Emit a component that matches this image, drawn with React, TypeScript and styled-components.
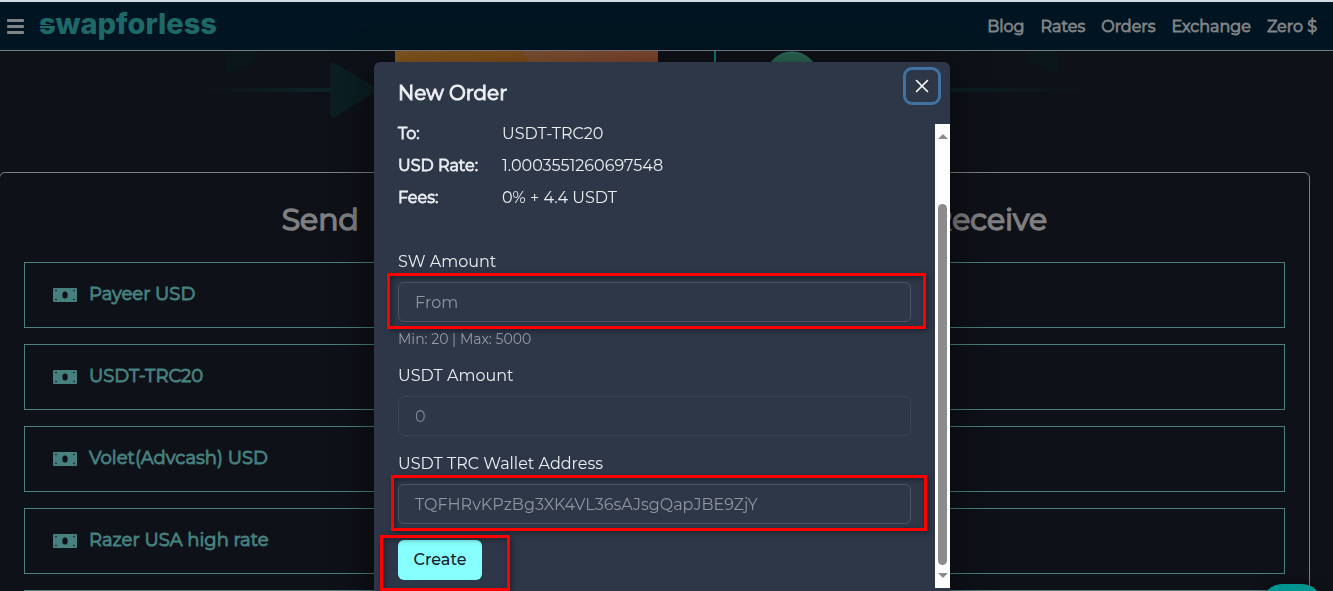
import React from "react";
import styled, { createGlobalStyle, css } from "styled-components";

const GlobalStyle = createGlobalStyle`
  *, *::before, *::after { box-sizing: border-box; }
  html, body { margin: 0; background: #0e1118; }
  body { font-family: Montserrat, Inter, "Liberation Sans", sans-serif; font-size: 16px; line-height: 24px; overflow: hidden; }
  h1, h2, p, dl, dd, ul { margin: 0; padding: 0; }
`;

/* Regular face thickened by an outline, keeping the regular letter widths. */
const emphasis = css`
  font-weight: 400;
  -webkit-text-stroke: 0.05em currentColor;
`;

const Page = styled.div`
  height: 100vh;
  overflow: hidden;
`;

const Header = styled.header`
  display: flex;
  align-items: center;
  height: 51px;
  padding: 0 16px 0 7px;
  background: #001521;
  border-top: 2px solid #d0dce0;
  border-bottom: 1px solid #767c80;
`;

const MenuButton = styled.button`
  display: flex;
  padding: 0;
  border: 0;
  background: none;
  color: #808486;
`;

const Logo = styled.a`
  position: relative;
  margin: 0 auto 4px 15px;
  font-family: Inter, sans-serif;
  font-size: 29px;
  line-height: 40px;
  font-weight: 800;
  color: #1e6868;
  text-decoration: none;

  &::before {
    content: "";
    position: absolute;
    left: 1px;
    top: 21px;
    width: 15px;
    height: 3px;
    background: #1e6868;
    border-top: 1px solid #001521;
  }
`;

const Nav = styled.nav`
  display: flex;
  gap: 16px;
  padding-top: 2px;
`;

const NavLink = styled.a`
  ${emphasis}
  color: #808486;
  text-decoration: none;
`;

const Hero = styled.section`
  height: 121px;
  overflow: hidden;

  svg { display: block; width: 100%; height: 121px; }
`;

const Exchange = styled.main`
  display: grid;
  grid-template-columns: 1fr 1fr;
  column-gap: 76px;
  margin: 0 23px 0 -1px;
  padding: 24px;
  border: 1px solid #7d8184;
  border-radius: 6px;
`;

const ColumnTitle = styled.h1`
  ${emphasis}
  margin-bottom: 20px;
  font-size: 30px;
  line-height: 45px;
  color: #7f7f81;
  text-align: center;
`;

const CurrencyList = styled.div`
  display: flex;
  flex-direction: column;
  gap: 16px;
`;

const Currency = styled.button`
  display: flex;
  align-items: center;
  gap: 12px;
  height: 66px;
  padding: 0 28px 2px;
  border: 1px solid #4a817e;
  background: none;
  color: #46807f;
  font: inherit;
  font-size: 18px;
  ${emphasis}

  svg { position: relative; top: 1px; }
`;

const Overlay = styled.div`
  position: fixed;
  inset: 0;
  display: flex;
  justify-content: center;
  align-items: flex-start;
  padding: 62px 9px 0 0;
`;

const Modal = styled.section`
  width: 576px;
  max-width: 100%;
  padding-bottom: 16px;
  border-radius: 6px;
  background: #2d3748;
  color: #eceef1;
  box-shadow: 0 10px 40px rgba(0, 0, 0, 0.6);
`;

const ModalHeader = styled.header`
  display: flex;
  justify-content: space-between;
  align-items: flex-start;
  height: 62px;
  padding: 8px 12px 0 24px;
`;

const ModalTitle = styled.h2`
  ${emphasis}
  padding-top: 8px;
  font-size: 20px;
  line-height: 30px;
`;

const CloseButton = styled.button`
  display: grid;
  place-items: center;
  width: 32px;
  height: 32px;
  padding: 0;
  border: 0;
  border-radius: 6px;
  background: none;
  color: #fff;
  box-shadow: 0 0 0 3px #4272a1;
`;

const ModalBody = styled.div`
  display: flex;
  height: 464px;
`;

const Content = styled.div`
  flex: 1;
  padding: 0 24px;
`;

const Summary = styled.dl`
  display: grid;
  grid-template-columns: 104px 1fr;
  row-gap: 8px;
  padding: 0 0 40px;
  margin-top: -2px;

  dt { ${emphasis} }
`;

const Form = styled.form`
  display: flex;
  flex-direction: column;
  gap: 16px;
`;

const Field = styled.div`
  display: flex;
  flex-direction: column;
  gap: 8px;
`;

const Label = styled.label``;

const InputWrap = styled.div`
  position: relative;
`;

const Input = styled.input`
  display: block;
  width: 100%;
  height: 40px;
  padding: 0 16px;
  border: 1px solid #4b5464;
  border-radius: 6px;
  background: transparent;
  color: #8c929c;
  font: inherit;

  &::placeholder { color: #8f96a0; opacity: 1; }
  &:disabled { border-color: #394354; color: #7c8490; }
`;

const Hint = styled.p`
  margin: -1px 0;
  font-size: 14px;
  line-height: 20px;
  color: #969ca5;
`;

const CreateWrap = styled.div`
  position: relative;
  width: 84px;
`;

const CreateButton = styled.button`
  width: 84px;
  height: 40px;
  padding: 0;
  border: 0;
  border-radius: 6px;
  background: #86fffe;
  color: #1a202c;
  font: inherit;
  font-weight: 500;
`;

const Highlight = styled.span<{ $inset: string }>`
  position: absolute;
  inset: ${(p) => p.$inset};
  border: 3px solid #fe0000;
  box-shadow: 2px 2px 5px rgba(0, 0, 0, 0.35), inset 2px 2px 5px rgba(0, 0, 0, 0.35);
  pointer-events: none;
`;

const ScrollTrack = styled.div`
  display: flex;
  flex-direction: column;
  align-items: center;
  justify-content: space-between;
  width: 15px;
  padding: 10px 0;
  background: #fdfdfd;
`;

const ScrollThumb = styled.div`
  flex: 1;
  width: 9px;
  margin: 65px 0 8px;
  border-radius: 5px;
  background: #8b8b8b;
`;

const ScrollArrow = styled.span<{ $down?: boolean }>`
  border: 5px solid transparent;
  border-width: ${(p) => (p.$down ? "5px 5px 0" : "0 5px 5px")};
  border-color: ${(p) => (p.$down ? "#8b8b8b transparent transparent" : "transparent transparent #8b8b8b")};
`;

const ChatButton = styled.button`
  position: fixed;
  top: 584px;
  right: 11px;
  width: 60px;
  height: 56px;
  border: 0;
  border-radius: 20px;
  background: #009591;
  box-shadow: 0 0 12px rgba(0, 0, 0, 0.5);
`;

const MenuIcon = () => (
  <svg width="17" height="16" viewBox="0 0 17 16" fill="currentColor" aria-hidden="true">
    <rect y="1" width="17" height="3" rx="1" />
    <rect y="7" width="17" height="3" rx="1" />
    <rect y="13" width="17" height="3" rx="1" />
  </svg>
);

const CashIcon = () => (
  <svg width="24" height="14" viewBox="0 0 24 14" aria-hidden="true">
    <rect width="24" height="14" rx="1" fill="#46807f" />
    <ellipse cx="12" cy="7" rx="2.700" ry="3.500" fill="#0e1118" />
    <g fill="#0e1118">
      <circle cx="3" cy="2.500" r=".8" />
      <circle cx="21" cy="2.500" r=".8" />
      <circle cx="3" cy="11.500" r=".8" />
      <circle cx="21" cy="11.500" r=".8" />
    </g>
  </svg>
);

const CloseIcon = () => (
  <svg width="14" height="14" viewBox="0 0 14 14" fill="none" stroke="currentColor" strokeWidth="1.600" strokeLinecap="round" aria-hidden="true">
    <path d="M1.500 1.500l11 11M12.500 1.500l-11 11" />
  </svg>
);

const HeroArt = () => (
  <svg viewBox="0 51 1333 121" preserveAspectRatio="xMidYMin slice" aria-hidden="true">
    <defs>
      <linearGradient id="orange">
        <stop offset="0" stopColor="#865a20" />
        <stop offset="1" stopColor="#7e4516" />
      </linearGradient>
      <linearGradient id="copper">
        <stop offset="0" stopColor="#805333" />
        <stop offset="1" stopColor="#80472f" />
      </linearGradient>
      <linearGradient id="trailLeft">
        <stop offset="0" stopColor="#0c2628" stopOpacity="0" />
        <stop offset="1" stopColor="#0c2425" />
      </linearGradient>
      <linearGradient id="trailRight">
        <stop offset="0" stopColor="#0c2023" />
        <stop offset="1" stopColor="#0c2023" stopOpacity="0" />
      </linearGradient>
    </defs>
    <path d="M226 51v25l27-14q6-4 3-11z" fill="#0b161b" />
    <rect x="200" y="88" width="132" height="4" fill="url(#trailLeft)" />
    <path d="M330 65q1-4 5-2l44 27-44 27q-4 2-5-2z" fill="#0b1e22" />
    <path d="M395 51h263v12H395z" fill="url(#orange)" />
    <path d="M522 51h136v12H529z" fill="url(#copper)" />
    <path d="M714 51h2v12h-2z" fill="#0b7977" />
    <circle cx="792" cy="78" r="26" fill="#2a6551" stroke="#2f7c68" />
    <rect x="950" y="88" width="146" height="4" fill="url(#trailRight)" />
    <path d="M1058 51v25l-27-14q-6-4-3-11z" fill="#0b161b" />
  </svg>
);

const navItems = ["Blog", "Rates", "Orders", "Exchange", "Zero $"];
const sendItems = ["Payeer USD", "USDT-TRC20", "Volet(Advcash) USD", "Razer USA high rate", ""];

export default function App() {
  return (
    <Page>
      <GlobalStyle />
      <Header>
        <MenuButton aria-label="Menu"><MenuIcon /></MenuButton>
        <Logo href="#">swapforless</Logo>
        <Nav>
          {navItems.map((item) => <NavLink key={item} href="#">{item}</NavLink>)}
        </Nav>
      </Header>
      <Hero><HeroArt /></Hero>
      <Exchange>
        <div>
          <ColumnTitle>Send</ColumnTitle>
          <CurrencyList>
            {sendItems.map((item) => (
              <Currency key={item}><CashIcon />{item}</Currency>
            ))}
          </CurrencyList>
        </div>
        <div>
          <ColumnTitle>Receive</ColumnTitle>
          <CurrencyList>
            {sendItems.map((item) => <Currency key={item} aria-label="Receive currency" />)}
          </CurrencyList>
        </div>
      </Exchange>

      <Overlay>
        <Modal role="dialog" aria-labelledby="order-title">
          <ModalHeader>
            <ModalTitle id="order-title">New Order</ModalTitle>
            <CloseButton aria-label="Close"><CloseIcon /></CloseButton>
          </ModalHeader>
          <ModalBody>
            <Content>
              <Summary>
                <dt>To:</dt><dd>USDT-TRC20</dd>
                <dt>USD Rate:</dt><dd>1.0003551260697548</dd>
                <dt>Fees:</dt><dd>0% + 4.4 USDT</dd>
              </Summary>
              <Form onSubmit={(e) => e.preventDefault()}>
                <Field>
                  <Label htmlFor="from">SW Amount</Label>
                  <InputWrap>
                    <Input id="from" placeholder="From" />
                    <Highlight $inset="-9px -15px -7px -11px" />
                  </InputWrap>
                  <Hint>Min: 20 | Max: 5000</Hint>
                </Field>
                <Field>
                  <Label htmlFor="amount">USDT Amount</Label>
                  <Input id="amount" defaultValue="0" disabled />
                </Field>
                <Field>
                  <Label htmlFor="wallet">USDT TRC Wallet Address</Label>
                  <InputWrap>
                    <Input id="wallet" placeholder="TQFHRvKPzBg3XK4VL36sAJsgQapJBE9ZjY" />
                    <Highlight $inset="-9px -16px -7px -7px" />
                  </InputWrap>
                </Field>
                <CreateWrap>
                  <CreateButton type="submit">Create</CreateButton>
                  <Highlight $inset="-5px -28px -11px -18px" />
                </CreateWrap>
              </Form>
            </Content>
            <ScrollTrack>
              <ScrollArrow />
              <ScrollThumb />
              <ScrollArrow $down />
            </ScrollTrack>
          </ModalBody>
        </Modal>
      </Overlay>
      <ChatButton aria-label="Open chat" />
    </Page>
  );
}
